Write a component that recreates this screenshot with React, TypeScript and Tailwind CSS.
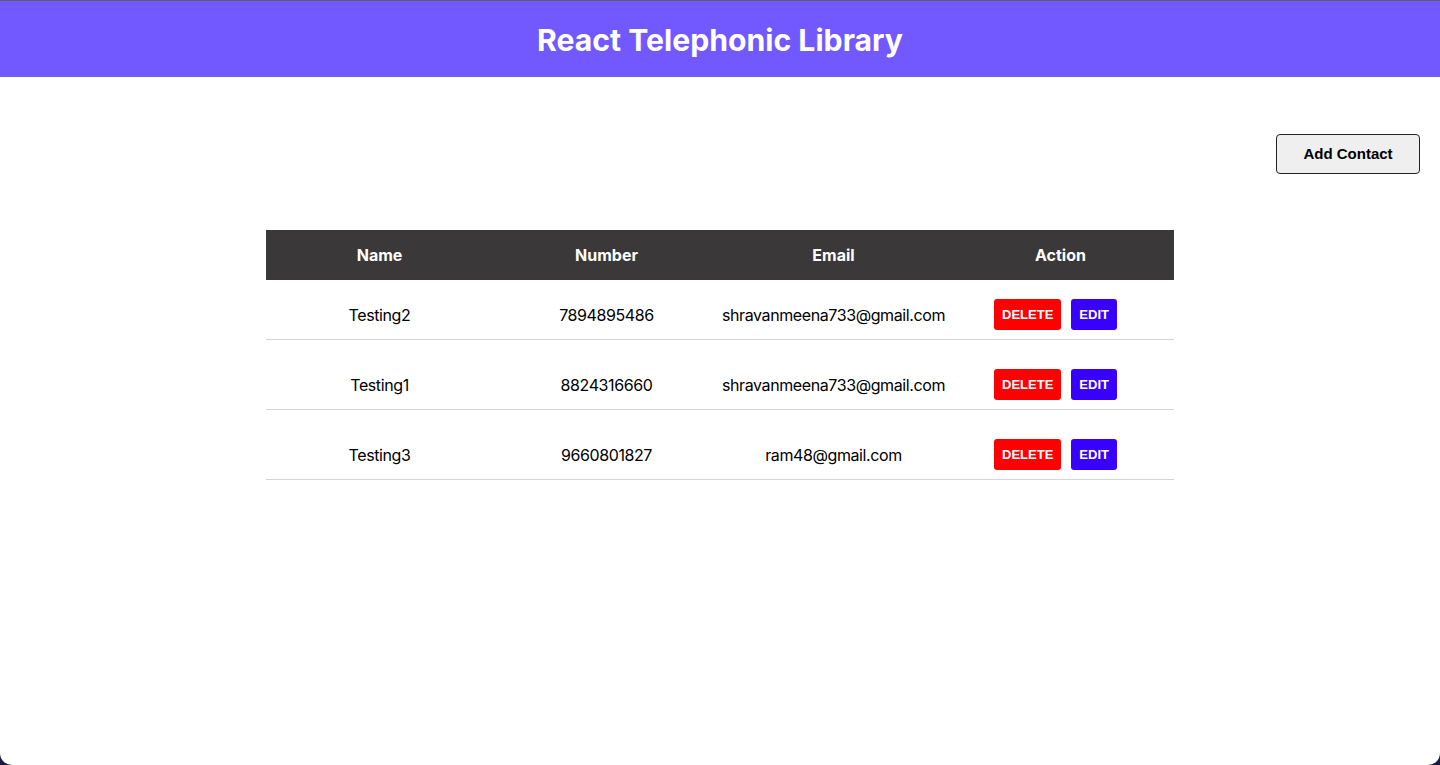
import React from 'react'

const contacts = [
    { name: 'Testing2', number: '7894895486', email: 'shravanmeena733@gmail.com' },
    { name: 'Testing1', number: '8824316660', email: 'shravanmeena733@gmail.com' },
    { name: 'Testing3', number: '9660801827', email: 'ram48@gmail.com' },
]

export default function App() {
    return (
        <div className="h-[765px] w-full bg-[#1c1940] overflow-hidden">
            <div className="h-full w-full bg-white rounded-b-[12px] overflow-hidden flex flex-col font-['Inter',sans-serif]">
                {/* header */}
                <div className="h-[77px] shrink-0 border-t border-[#5f5f5f] bg-[#7159ff] flex items-center justify-center">
                    <h1 className="text-[30.2px] font-bold text-white leading-none mt-[2px]">React Telephonic Library</h1>
                </div>

                {/* add button row */}
                <div className="flex justify-end pt-[57px] pr-[20px]">
                    <button className="h-[40px] w-[144px] rounded-[4px] border border-[#222] bg-[#efefef] text-black text-[15px] font-bold font-['Liberation_Sans',Arial,sans-serif]">
                        Add Contact
                    </button>
                </div>

                {/* table */}
                <div className="mt-[56px] mx-auto w-[908px]">
                    <div className="grid grid-cols-4 h-[50px] bg-[#3a3839] text-white text-[16px] font-bold">
                        {['Name', 'Number', 'Email', 'Action'].map(h => (
                            <div key={h} className="flex items-center justify-center">{h}</div>
                        ))}
                    </div>
                    {contacts.map((c, i) => (
                        <div
                            key={c.name}
                            className={`grid grid-cols-4 border-b border-[#d4d4d4] text-[16px] text-black tracking-[-0.4px] ${i === 0 ? 'h-[60px] pt-[10px]' : 'h-[70px] pt-[20px]'}`}
                        >
                            <div className="flex items-center justify-center">{c.name}</div>
                            <div className="flex items-center justify-center">{c.number}</div>
                            <div className="flex items-center justify-center">{c.email}</div>
                            <div className="flex items-center justify-center tracking-normal font-['Liberation_Sans',Arial,sans-serif]">
                                <button className="h-[31px] px-[8px] mr-[10px] rounded-[3px] bg-[#ff0000] text-white text-[13px] font-bold">DELETE</button>
                                <button className="h-[31px] px-[8px] mr-[10px] rounded-[3px] bg-[#3700ff] text-white text-[13px] font-bold">EDIT</button>
                            </div>
                        </div>
                    ))}
                </div>
            </div>
        </div>
    )
}
